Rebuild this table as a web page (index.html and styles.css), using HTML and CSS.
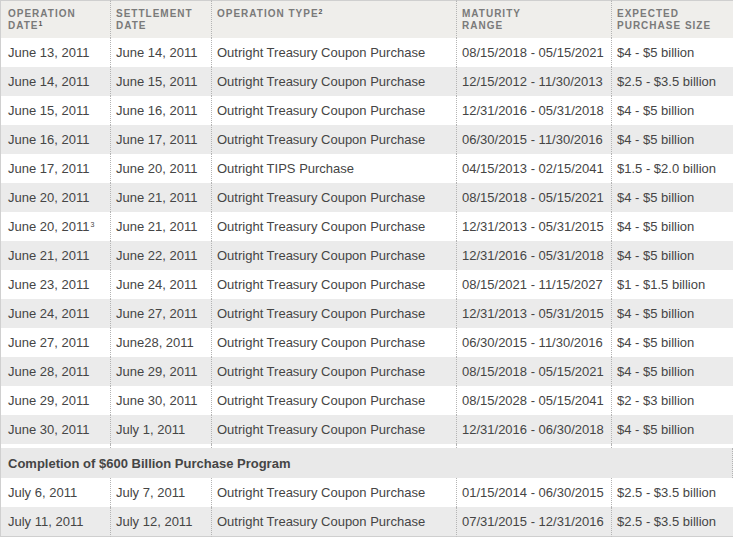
FILE: index.html
```html
<!DOCTYPE html>
<html>
<head>
<meta charset="utf-8">
<link rel="stylesheet" href="styles.css">
</head>
<body>
<table class="ops">
  <colgroup>
    <col class="c1"><col class="c2"><col class="c3"><col class="c4"><col class="c5">
  </colgroup>
  <thead>
    <tr>
      <th>OPERATION<br>DATE<sup class="hsup">1</sup></th>
      <th>SETTLEMENT<br>DATE</th>
      <th>OPERATION TYPE<sup class="hsup">2</sup></th>
      <th>MATURITY<br>RANGE</th>
      <th>EXPECTED<br>PURCHASE SIZE</th>
    </tr>
  </thead>
  <tbody>
    <tr><td>June 13, 2011</td><td>June 14, 2011</td><td>Outright Treasury Coupon Purchase</td><td>08/15/2018 - 05/15/2021</td><td>$4 - $5 billion</td></tr>
    <tr class="alt"><td>June 14, 2011</td><td>June 15, 2011</td><td>Outright Treasury Coupon Purchase</td><td>12/15/2012 - 11/30/2013</td><td>$2.5 - $3.5 billion</td></tr>
    <tr><td>June 15, 2011</td><td>June 16, 2011</td><td>Outright Treasury Coupon Purchase</td><td>12/31/2016 - 05/31/2018</td><td>$4 - $5 billion</td></tr>
    <tr class="alt"><td>June 16, 2011</td><td>June 17, 2011</td><td>Outright Treasury Coupon Purchase</td><td>06/30/2015 - 11/30/2016</td><td>$4 - $5 billion</td></tr>
    <tr><td>June 17, 2011</td><td>June 20, 2011</td><td>Outright TIPS Purchase</td><td>04/15/2013 - 02/15/2041</td><td>$1.5 - $2.0 billion</td></tr>
    <tr class="alt"><td>June 20, 2011</td><td>June 21, 2011</td><td>Outright Treasury Coupon Purchase</td><td>08/15/2018 - 05/15/2021</td><td>$4 - $5 billion</td></tr>
    <tr><td>June 20, 2011<sup class="dsup">3</sup></td><td>June 21, 2011</td><td>Outright Treasury Coupon Purchase</td><td>12/31/2013 - 05/31/2015</td><td>$4 - $5 billion</td></tr>
    <tr class="alt"><td>June 21, 2011</td><td>June 22, 2011</td><td>Outright Treasury Coupon Purchase</td><td>12/31/2016 - 05/31/2018</td><td>$4 - $5 billion</td></tr>
    <tr><td>June 23, 2011</td><td>June 24, 2011</td><td>Outright Treasury Coupon Purchase</td><td>08/15/2021 - 11/15/2027</td><td>$1 - $1.5 billion</td></tr>
    <tr class="alt"><td>June 24, 2011</td><td>June 27, 2011</td><td>Outright Treasury Coupon Purchase</td><td>12/31/2013 - 05/31/2015</td><td>$4 - $5 billion</td></tr>
    <tr><td>June 27, 2011</td><td>June28, 2011</td><td>Outright Treasury Coupon Purchase</td><td>06/30/2015 - 11/30/2016</td><td>$4 - $5 billion</td></tr>
    <tr class="alt"><td>June 28, 2011</td><td>June 29, 2011</td><td>Outright Treasury Coupon Purchase</td><td>08/15/2018 - 05/15/2021</td><td>$4 - $5 billion</td></tr>
    <tr><td>June 29, 2011</td><td>June 30, 2011</td><td>Outright Treasury Coupon Purchase</td><td>08/15/2028 - 05/15/2041</td><td>$2 - $3 billion</td></tr>
    <tr class="alt"><td>June 30, 2011</td><td>July 1, 2011</td><td>Outright Treasury Coupon Purchase</td><td>12/31/2016 - 06/30/2018</td><td>$4 - $5 billion</td></tr>
    <tr class="spacer"><td></td><td></td><td></td><td></td><td></td></tr>
    <tr class="section"><td colspan="5">Completion of $600 Billion Purchase Program</td></tr>
    <tr><td>July 6, 2011</td><td>July 7, 2011</td><td>Outright Treasury Coupon Purchase</td><td>01/15/2014 - 06/30/2015</td><td>$2.5 - $3.5 billion</td></tr>
    <tr class="alt last"><td>July 11, 2011</td><td>July 12, 2011</td><td>Outright Treasury Coupon Purchase</td><td>07/31/2015 - 12/31/2016</td><td>$2.5 - $3.5 billion</td></tr>
  </tbody>
</table>
</body>
</html>
```

FILE: styles.css
```css
html, body {
  margin: 0;
  padding: 0;
  background: #ffffff;
}

.ops {
  width: 733px;
  table-layout: fixed;
  border-collapse: separate;
  border-spacing: 0;
  font-family: "Liberation Sans", Arial, sans-serif;
  font-size: 13px;
  color: #454545;
}

.c1 { width: 110px; }
.c2 { width: 101px; }
.c3 { width: 245px; }
.c4 { width: 155px; }
.c5 { width: 122px; }

.ops th,
.ops td {
  border-left: 1px dotted #b4b4b4;
  padding: 0 0 0 5px;
  text-align: left;
  white-space: nowrap;
  overflow: hidden;
}

.ops th:first-child,
.ops td:first-child {
  border-left: 1px solid #d0d0d0;
  padding-left: 7px;
}

.ops th {
  background: #efeeeb;
  border-top: 1px solid #cfcfcf;
  padding-top: 7px;
  padding-bottom: 6px;
  vertical-align: top;
  font-size: 10px;
  line-height: 12px;
  font-weight: bold;
  letter-spacing: 1px;
  color: #7a7a7a;
}

.hsup {
  font-size: 7px;
  line-height: 0;
  letter-spacing: 0;
  vertical-align: 3px;
  color: #555;
}

.ops td {
  height: 29px;
  line-height: 15px;
  vertical-align: middle;
  background: #ffffff;
}

.ops tr.alt td {
  background: #ebebeb;
}

.dsup {
  font-size: 7px;
  line-height: 0;
  vertical-align: 4px;
  margin-left: 1px;
}

.ops tr.spacer td {
  height: 4px;
  line-height: 0;
  font-size: 0;
  background: #ffffff;
}

.ops tr.section td {
  height: 30px;
  background: #e9e9e9;
  font-weight: bold;
  color: #454545;
  border-right: 1px dotted #b4b4b4;
}

.ops tr.last td {
  border-bottom: 1px solid #cfcfcf;
}
```
